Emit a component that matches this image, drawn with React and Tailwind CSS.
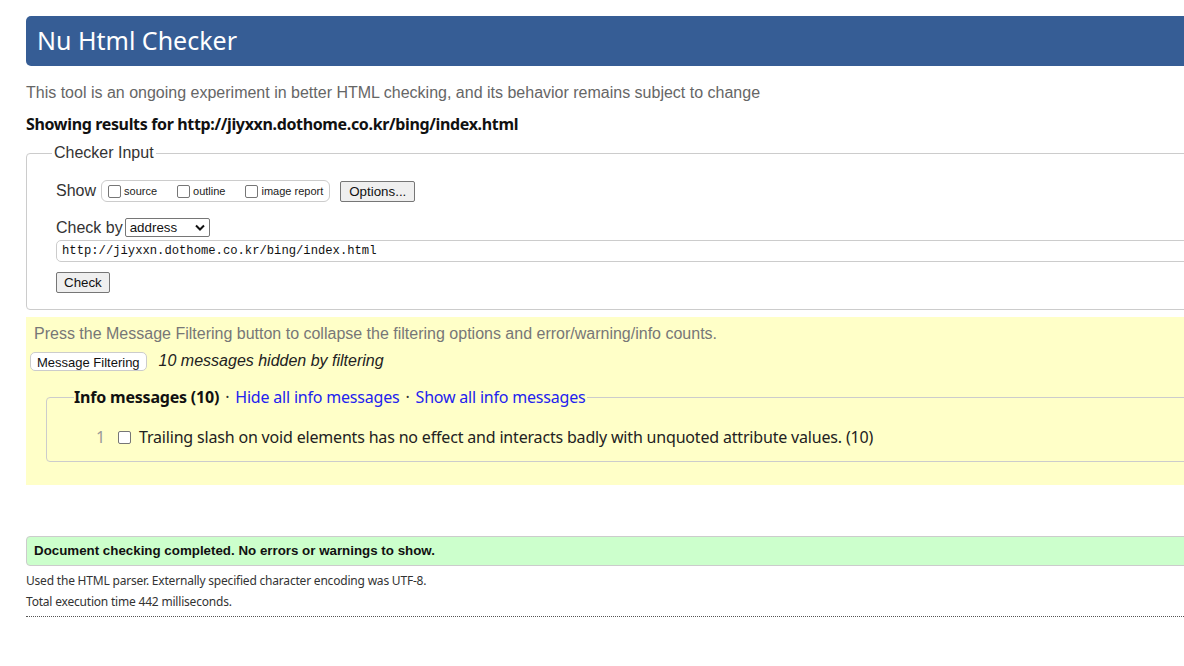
import React from 'react'

const sans = "font-['Liberation_Sans',Arial,sans-serif]"
const kr = "font-['Noto_Sans','Noto_Sans_CJK_KR',sans-serif]"

function Box({ label }) {
  return (
    <label className="flex items-center">
      <span className="inline-block w-[13px] h-[13px] border border-[#767676] rounded-[2px] bg-white mr-[3px]"></span>
      <span className="text-[11px] text-[#222]">{label}</span>
    </label>
  )
}

export default function App() {
  return (
    <div className={`w-[1184px] h-[666px] overflow-hidden bg-white ${sans}`}>
      <div className="w-[1220px] ml-[26px] pt-[16px]">
        {/* header */}
        <div className="h-[50px] bg-[#365d95] rounded-l-[5px] flex items-center pl-[11px] pb-[1px]">
          <h1 className={`text-white text-[25px] leading-none ${kr}`}>Nu Html Checker</h1>
        </div>

        <p className="mt-[17px] text-[16px] leading-[20px] text-[#666]">
          This tool is an ongoing experiment in better HTML checking, and its behavior remains subject to change
        </p>
        <p className={`mt-[11px] text-[16px] leading-[20px] font-bold tracking-[-0.35px] text-[#111] ${kr}`}>
          Showing results for http://jiyxxn.dothome.co.kr/bing/index.html
        </p>

        {/* checker input */}
        <div className="relative mt-[19px] h-[157px] border border-[#ccc] rounded-[4px] pl-[29px] pt-[26px]">
          <span className="absolute left-[25px] top-[-11px] bg-white px-[2px] text-[16px] leading-[20px] text-[#333]">
            Checker Input
          </span>
          <div className="flex items-center h-[22px]">
            <span className="text-[16px] text-[#333] mr-[5px]">Show</span>
            <div className="flex items-center h-[22px] border border-[#ccc] rounded-[6px] px-[6px] gap-[20px]">
              <Box label="source" />
              <Box label="outline" />
              <Box label="image report" />
            </div>
            <button className="ml-[10px] h-[21px] px-[8px] border border-[#767676] rounded-[2px] bg-[#efefef] text-[13.33px] text-[#111]">
              Options...
            </button>
          </div>
          <div className="flex items-center mt-[16px] h-[19px]">
            <span className="text-[16px] text-[#333] mr-[2px]">Check by</span>
            <div className="flex items-center justify-between w-[85px] h-[19px] border border-[#767676] rounded-[2px] bg-white px-[4px]">
              <span className="text-[13.33px] text-[#111]">address</span>
              <svg width="10" height="7" viewBox="0 0 10 7"><path d="M1 1.5 L5 5.5 L9 1.5" fill="none" stroke="#111" strokeWidth="2" /></svg>
            </div>
          </div>
          <div className="mt-[3px] h-[22px] border border-[#ccc] rounded-l-[5px] flex items-center pl-[5px]">
            <span className="font-['Liberation_Mono',monospace] text-[12.2px] text-[#111]">http://jiyxxn.dothome.co.kr/bing/index.html</span>
          </div>
          <button className="mt-[10px] h-[21px] px-[7px] border border-[#767676] rounded-[2px] bg-[#efefef] text-[13.33px] text-[#111]">
            Check
          </button>
        </div>

        {/* filtering */}
        <div className="mt-[7px] h-[168px] bg-[#ffffc8] pt-[8px] pl-[8px]">
          <p className="text-[16px] leading-[18px] text-[#777]">
            Press the Message Filtering button to collapse the filtering options and error/warning/info counts.
          </p>
          <div className="flex items-center mt-[6px] -ml-[4px]">
            <button className="h-[19px] px-[6px] border border-[#ccc] rounded-[5px] bg-white text-[13px] text-[#111]">
              Message Filtering
            </button>
            <span className="ml-[12px] italic text-[16px] text-[#222]">10 messages hidden by filtering</span>
          </div>
          <div className={`relative mt-[24px] ml-[12px] h-[65px] border border-[#ccc] rounded-l-[4px] ${kr}`}>
            <div className="absolute left-[27px] top-[-13px] flex items-center bg-[#ffffc8] pr-[1px] text-[16px] leading-[24px] tracking-[-0.2px]">
              <span className="font-bold text-[#111]">Info messages (10)</span>
              <span className="text-[#333] mx-[6px]">·</span>
              <span className="text-[#22e]">Hide all info messages</span>
              <span className="text-[#333] mx-[6px]">·</span>
              <span className="text-[#22e]">Show all info messages</span>
            </div>
            <div className="flex items-center pt-[27px] pl-[49px] text-[16px] leading-[24px] tracking-[-0.18px]">
              <span className="text-[#999] w-[22px]">1</span>
              <span className="inline-block w-[13px] h-[13px] border border-[#767676] rounded-[2px] bg-white mr-[8px]"></span>
              <span className="text-[#222]">Trailing slash on void elements has no effect and interacts badly with unquoted attribute values. (10)</span>
            </div>
          </div>
        </div>

        {/* result */}
        <div className="mt-[51px] h-[30px] bg-[#ccffcc] border border-[#ccc] rounded-l-[4px] flex items-center pl-[7px]">
          <span className="font-bold text-[13.33px] text-[#111]">Document checking completed. No errors or warnings to show.</span>
        </div>
        <p className={`mt-[4px] text-[12px] leading-[21px] tracking-[-0.2px] text-[#333] ${kr}`}>
          Used the HTML parser. Externally specified character encoding was UTF-8.
        </p>
        <p className={`text-[12px] leading-[21px] tracking-[-0.2px] text-[#333] ${kr}`}>Total execution time 442 milliseconds.</p>
        <div className="mt-[4px] border-t border-dotted border-[#555]"></div>
      </div>
    </div>
  )
}
